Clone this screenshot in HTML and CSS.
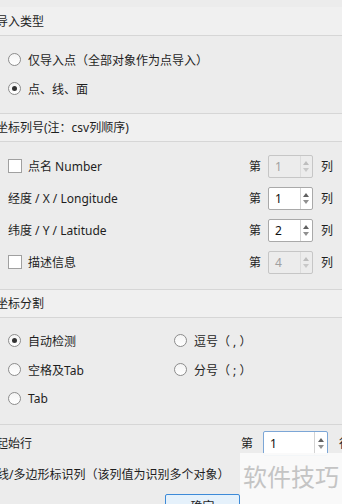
FILE: index.html
```html
<!DOCTYPE html>
<html lang="zh-CN">
<head>
<meta charset="utf-8">
<link rel="stylesheet" href="styles.css">
</head>
<body>
<div class="dialog">
  <section class="group first">
    <div class="group-head">导入类型</div>
    <div class="group-body list">
      <label class="row"><span class="radio"></span><span>仅导入点（全部对象作为点导入）</span></label>
      <label class="row"><span class="radio checked"></span><span>点、线、面</span></label>
    </div>
  </section>

  <section class="group">
    <div class="group-head">坐标列号(注：csv列顺序)</div>
    <div class="group-body cols">
      <div class="row col-row">
        <label class="lbl"><span class="check"></span><span>点名 Number</span></label>
        <div class="spin-wrap"><span>第</span><span class="spin disabled"><span class="val">1</span><span class="arrows"><i class="up"></i><i class="down"></i></span></span><span>列</span></div>
      </div>
      <div class="row col-row">
        <span class="lbl plain">经度 / X / Longitude</span>
        <div class="spin-wrap"><span>第</span><span class="spin"><span class="val">1</span><span class="arrows"><i class="up"></i><i class="down"></i></span></span><span>列</span></div>
      </div>
      <div class="row col-row">
        <span class="lbl plain">纬度 / Y / Latitude</span>
        <div class="spin-wrap"><span>第</span><span class="spin"><span class="val">2</span><span class="arrows"><i class="up"></i><i class="down"></i></span></span><span>列</span></div>
      </div>
      <div class="row col-row">
        <label class="lbl"><span class="check"></span><span>描述信息</span></label>
        <div class="spin-wrap"><span>第</span><span class="spin disabled"><span class="val">4</span><span class="arrows"><i class="up"></i><i class="down"></i></span></span><span>列</span></div>
      </div>
    </div>
  </section>

  <section class="group">
    <div class="group-head">坐标分割</div>
    <div class="group-body sep-grid">
      <label class="row"><span class="radio checked"></span><span>自动检测</span></label>
      <label class="row"><span class="radio"></span><span>逗号（ , ）</span></label>
      <label class="row"><span class="radio"></span><span>空格及Tab</span></label>
      <label class="row"><span class="radio"></span><span>分号（ ; ）</span></label>
      <label class="row"><span class="radio"></span><span>Tab</span></label>
    </div>
  </section>

  <section class="group last">
    <div class="start-row">
      <span class="start-label">起始行</span>
      <div class="spin-wrap start"><span>第</span><span class="spin focus wide"><span class="val">1</span><span class="arrows"><i class="up"></i><i class="down"></i></span></span><span>行</span></div>
    </div>
    <div class="ident-row">线/多边形标识列（该列值为识别多个对象）</div>
    <div class="btn-row"><button class="btn">确定</button></div>
  </section>

  <div class="watermark">软件技巧</div>
</div>
</body>
</html>
```

FILE: styles.css
```css
html, body {
  margin: 0;
  padding: 0;
}
body {
  width: 342px;
  height: 504px;
  overflow: hidden;
  background: #ececec;
  font-family: "Noto Sans", "Noto Sans CJK SC", sans-serif;
  font-size: 12px;
  color: #1e1e1e;
}
.dialog {
  position: relative;
  width: 342px;
  height: 504px;
  overflow: hidden;
  padding-top: 7px;
  box-sizing: border-box;
}
.group {
  border-top: 1px solid #d6d6d6;
}
.group.first {
  border-top: none;
}
.group-head {
  height: 27px;
  line-height: 27px;
  background: #f0f0f0;
  border-bottom: 1px solid #d6d6d6;
  text-indent: -4px;
  white-space: nowrap;
}
.group.first .group-head {
  height: 28px;
  line-height: 29px;
}
.group-body {
  background: #ececec;
}
.list {
  padding: 9px 0 10px;
  display: flex;
  flex-direction: column;
}
.row {
  display: flex;
  align-items: center;
  height: 29px;
  padding-left: 8px;
  gap: 7px;
  white-space: nowrap;
}
.radio {
  width: 11px;
  height: 11px;
  border: 1px solid #8c8c8c;
  border-radius: 50%;
  background: linear-gradient(#f4f4f4, #ffffff);
  display: flex;
  align-items: center;
  justify-content: center;
  flex: none;
}
.radio.checked::after {
  content: "";
  width: 5px;
  height: 5px;
  border-radius: 50%;
  background: #333;
}
.check {
  width: 12px;
  height: 12px;
  border: 1px solid #a0a0a0;
  background: #fff;
  flex: none;
}
.cols {
  padding: 8px 0 11px;
  display: flex;
  flex-direction: column;
}
.col-row {
  height: 32px;
  justify-content: space-between;
  padding-right: 9px;
}
.lbl {
  display: flex;
  align-items: center;
  gap: 6px;
}
.spin-wrap {
  display: flex;
  align-items: center;
  gap: 7px;
}
.spin {
  display: flex;
  width: 45px;
  height: 23px;
  box-sizing: border-box;
  border: 1px solid #a9a9a9;
  border-radius: 2px;
  background: #fff;
  margin-right: 1px;
}
.spin .val {
  flex: 1;
  line-height: 21px;
  padding-left: 6px;
  color: #111;
}
.spin .arrows {
  width: 11px;
  border-left: 1px solid #d4d4d4;
  display: flex;
  flex-direction: column;
  align-items: center;
  justify-content: center;
  gap: 3px;
}
.spin i {
  display: block;
  width: 0;
  height: 0;
  border-left: 3.5px solid transparent;
  border-right: 3.5px solid transparent;
}
.spin i.up {
  border-bottom: 4px solid #606060;
}
.spin i.down {
  border-top: 4px solid #909090;
}
.spin.disabled {
  background: #ececec;
  border-color: #c6c6c6;
}
.spin.disabled .val {
  color: #a0a0a0;
}
.spin.disabled .arrows {
  border-left-color: #dcdcdc;
}
.spin.disabled i.up {
  border-bottom-color: #bdbdbd;
}
.spin.disabled i.down {
  border-top-color: #c8c8c8;
}
.sep-grid {
  padding: 8px 0 11px;
  display: grid;
  grid-template-columns: 166px 1fr;
}
.start-row {
  display: flex;
  align-items: center;
  justify-content: space-between;
  height: 35px;
  text-indent: -4px;
}
.start-label {
  display: block;
}
.spin-wrap.start {
  margin-right: -9px;
  gap: 10px;
  text-indent: 0;
  padding-top: 1px;
}
.spin.wide {
  width: 65px;
  height: 25px;
  border-color: #7ca6d6;
}
.spin.wide .val {
  line-height: 23px;
}
.spin.wide .arrows {
  width: 12px;
}
.ident-row {
  height: 29px;
  line-height: 29px;
  text-indent: -3px;
  white-space: nowrap;
}
.btn-row {
  padding: 5px 0 0 165px;
}
.btn {
  width: 75px;
  height: 24px;
  border: 1px solid #3c8ad8;
  border-radius: 2px;
  background: #e5f1fb;
  font-family: inherit;
  font-size: 12px;
  color: #1e1e1e;
  padding: 0;
}
.watermark {
  position: absolute;
  left: 240px;
  top: 453px;
  right: 0;
  bottom: 0;
  background: rgba(250, 250, 250, 0.95);
  color: #c4c4c4;
  font-size: 24px;
  line-height: 46px;
  padding-left: 3px;
  white-space: nowrap;
  font-family: "Noto Sans CJK SC", sans-serif;
}
```
